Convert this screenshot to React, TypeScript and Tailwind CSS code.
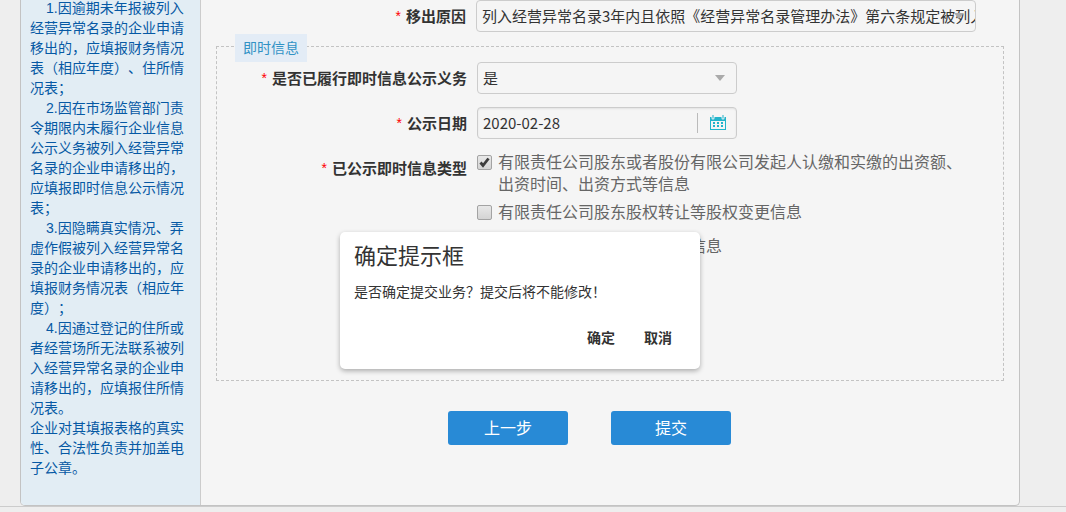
import { useState, type ReactNode } from 'react';

const NOTES = [
  '1.因逾期未年报被列入经营异常名录的企业申请移出的，应填报财务情况表（相应年度）、住所情况表；',
  '2.因在市场监管部门责令期限内未履行企业信息公示义务被列入经营异常名录的企业申请移出的，应填报即时信息公示情况表；',
  '3.因隐瞒真实情况、弄虚作假被列入经营异常名录的企业申请移出的，应填报财务情况表（相应年度）；',
  '4.因通过登记的住所或者经营场所无法联系被列入经营异常名录的企业申请移出的，应填报住所情况表。',
];

const INFO_TYPES = [
  { id: 'capital', text: '有限责任公司股东或者股份有限公司发起人认缴和实缴的出资额、出资时间、出资方式等信息' },
  { id: 'transfer', text: '有限责任公司股东股权转让等股权变更信息' },
  { id: 'license', text: '行政许可取得、变更、延续信息' },
];

function FieldLabel({ htmlFor, children }: { htmlFor?: string; children: ReactNode }) {
  return (
    <label
      htmlFor={htmlFor}
      className="flex h-8 w-[250px] shrink-0 items-center justify-end gap-[5px] text-[15px] font-bold text-[#333]"
    >
      <span className="font-['Liberation_Sans'] text-sm font-normal text-[#f00]">*</span>
      {children}
    </label>
  );
}

function Caret() {
  return (
    <svg
      className="pointer-events-none absolute top-[13px] right-3"
      width="10"
      height="6"
      viewBox="0 0 10 6"
      aria-hidden="true"
    >
      <path d="M0 0h10L5 6z" fill="#aaa" />
    </svg>
  );
}

function CalendarIcon() {
  return (
    <svg width="16" height="16" viewBox="0 0 16 16" fill="#23b4cb" aria-hidden="true">
      <path
        fillRule="evenodd"
        d="M0 2h1.500v1a1.500 1.500 0 0 0 3 0V2h7v1a1.500 1.500 0 0 0 3 0V2H16v13H0zM1 6v8h14V6z"
      />
      <path d="M2.500 0h1v3.500h-1zM12.500 0h1v3.500h-1z" />
      <path d="M3 7h2v2H3zM7 7h2v2H7zM11 7h2v2h-2zM3 10h2v2H3zM7 10h2v2H7zM11 10h2v2h-2z" />
    </svg>
  );
}

function Checkbox({
  id,
  text,
  checked,
  onChange,
}: {
  id: string;
  text: string;
  checked: boolean;
  onChange: () => void;
}) {
  return (
    <label htmlFor={id} className="flex gap-1.5 text-base leading-[22px] text-[#666]">
      <span className="mt-[5px] grid h-[15px] w-[15px] shrink-0">
        <input
          id={id}
          type="checkbox"
          checked={checked}
          onChange={onChange}
          className="col-start-1 row-start-1 h-[15px] w-[15px] appearance-none rounded-xs border border-[#a3a3a3] bg-linear-to-b from-[#e8e8e8] to-[#d4d4d4]"
        />
        {checked && (
          <svg
            className="pointer-events-none col-start-1 row-start-1"
            width="15"
            height="15"
            viewBox="0 0 15 15"
            aria-hidden="true"
          >
            <path d="M3.500 7.500 6 10.500 11.500 3.500" fill="none" stroke="#3c3c3c" strokeWidth="2.800" />
          </svg>
        )}
      </span>
      <span>{text}</span>
    </label>
  );
}

export default function App() {
  const [reason, setReason] = useState(
    '列入经营异常名录3年内且依照《经营异常名录管理办法》第六条规定被列入经营异常名录'
  );
  const [date, setDate] = useState('2020-02-28');
  const [fulfilled, setFulfilled] = useState('是');
  const [selected, setSelected] = useState<string[]>(['capital']);
  const [open, setOpen] = useState(true);

  const toggle = (id: string) => {
    setSelected((prev) => (prev.includes(id) ? prev.filter((x) => x !== id) : [...prev, id]));
  };

  return (
    <div className="min-h-screen overflow-hidden bg-[#eee] font-['Noto_Sans_CJK_SC',sans-serif] [text-spacing-trim:space-all]">
      <div className="border-b border-[#ccc]">
        <div className="relative -mt-0.5 mr-[46px] ml-5 flex rounded-b-[5px] border border-t-0 border-[#c3c3c3] bg-[#f5f5f5]">
          <aside className="w-[180px] shrink-0 rounded-bl-[4px] border-r border-[#ccc] bg-[#e2edf4] pr-3.5 pb-[27px] pl-[9px] font-['Liberation_Sans','Noto_Sans_CJK_SC',sans-serif] text-sm leading-5 text-[#0659a4]">
            {NOTES.map((note) => (
              <p key={note} className="indent-4">
                {note}
              </p>
            ))}
            <p>企业对其填报表格的真实性、合法性负责并加盖电子公章。</p>
          </aside>

          <main className="min-w-0 flex-1 px-[15px] pt-0.5">
            <div className="flex gap-2.5">
              <FieldLabel htmlFor="reason">移出原因</FieldLabel>
              <div className="relative w-[500px]">
                <input
                  id="reason"
                  value={reason}
                  onChange={(e) => setReason(e.target.value)}
                  className="h-8 w-full rounded border border-[#ccc] bg-transparent pb-0.5 pl-[5px] text-[15px] text-[#333]"
                />
                <Caret />
              </div>
            </div>

            <section className="mt-3.5 min-h-[335px] border border-dashed border-[#c3c3c3]">
              <h2 className="-mt-[13px] ml-[18px] h-7 w-fit bg-[#e3ecf6] px-2 text-sm leading-[26px] text-[#3192c5]">
                即时信息
              </h2>
              <div className="flex flex-col gap-[13px]">
                <div className="flex gap-2.5">
                  <FieldLabel htmlFor="fulfilled">是否已履行即时信息公示义务</FieldLabel>
                  <div className="relative w-[260px]">
                    <select
                      id="fulfilled"
                      value={fulfilled}
                      onChange={(e) => setFulfilled(e.target.value)}
                      className="h-8 w-full appearance-none rounded border border-[#ccc] bg-transparent pl-[5px] text-[15px] text-[#333]"
                    >
                      <option>是</option>
                      <option>否</option>
                    </select>
                    <Caret />
                  </div>
                </div>

                <div className="flex gap-2.5">
                  <FieldLabel htmlFor="date">公示日期</FieldLabel>
                  <div className="flex h-8 w-[260px] items-center rounded border border-[#ccc] pr-2.5 shadow-[inset_0_1px_2px_rgba(0,0,0,0.08)]">
                    <input
                      id="date"
                      value={date}
                      onChange={(e) => setDate(e.target.value)}
                      className="min-w-0 flex-1 bg-transparent pl-[5px] text-[15px] text-[#333]"
                    />
                    <button
                      type="button"
                      aria-label="选择日期"
                      className="flex h-5 items-center border-l border-[#bbb] pl-3"
                    >
                      <CalendarIcon />
                    </button>
                  </div>
                </div>

                <div className="flex gap-2.5">
                  <FieldLabel>已公示即时信息类型</FieldLabel>
                  <div className="-mt-0.5 flex max-w-[490px] flex-col gap-y-1.5">
                    {INFO_TYPES.map((type) => (
                      <div key={type.id} className="last:mt-1.5">
                        <Checkbox
                          id={type.id}
                          text={type.text}
                          checked={selected.includes(type.id)}
                          onChange={() => toggle(type.id)}
                        />
                      </div>
                    ))}
                  </div>
                </div>
              </div>
            </section>

            <div className="mt-[30px] flex gap-[43px] pl-[232px]">
              <button
                type="button"
                className="h-[34px] w-[120px] rounded-[3px] bg-[#288ad6] pb-0.5 text-base text-white"
              >
                上一步
              </button>
              <button
                type="button"
                onClick={() => setOpen(true)}
                className="h-[34px] w-[120px] rounded-[3px] bg-[#288ad6] pb-0.5 text-base text-white"
              >
                提交
              </button>
            </div>
          </main>

          {open && (
            <div
              role="dialog"
              aria-labelledby="confirm-title"
              className="absolute top-[234px] left-1/2 w-[360px] -translate-x-1/2 rounded-[5px] bg-white px-3.5 pt-2.5 pb-[15px] text-sm text-[#333] shadow-[0_2px_5px_rgba(0,0,0,0.3)]"
            >
              <h3 id="confirm-title" className="text-[22px] leading-6">
                确定提示框
              </h3>
              <p className="mt-[15px] leading-5">是否确定提交业务？提交后将不能修改！</p>
              <div className="mt-[19px] flex justify-end gap-px">
                <button type="button" onClick={() => setOpen(false)} className="h-[34px] px-3.5 font-bold">
                  确定
                </button>
                <button type="button" onClick={() => setOpen(false)} className="h-[34px] px-3.5 font-bold">
                  取消
                </button>
              </div>
            </div>
          )}
        </div>
      </div>
    </div>
  );
}
